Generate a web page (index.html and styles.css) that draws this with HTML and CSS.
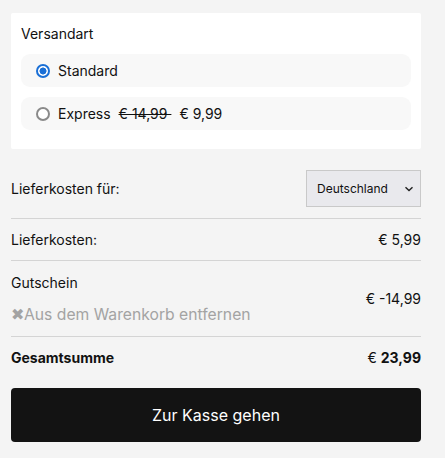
FILE: index.html
```html
<!DOCTYPE html>
<html lang="de">
<head>
<meta charset="utf-8">
<link rel="stylesheet" href="styles.css">
</head>
<body>
<div class="cart">
  <section class="card">
    <div class="card-title">Versandart</div>
    <div class="option">
      <span class="radio checked"></span>
      <span>Standard</span>
    </div>
    <div class="option">
      <span class="radio"></span>
      <span>Express</span>
      <span class="old-price">€ 14,99&nbsp;</span>
      <span>€ 9,99</span>
    </div>
  </section>

  <div class="row row-country">
    <span>Lieferkosten für:</span>
    <div class="select">
      <span>Deutschland</span>
      <svg class="chev" width="10" height="6" viewBox="0 0 10 6"><path d="M1.5 1.2 L5 4.6 L8.5 1.2" fill="none" stroke="#222" stroke-width="1.4"/></svg>
    </div>
  </div>

  <div class="row">
    <span>Lieferkosten:</span>
    <span>€ 5,99</span>
  </div>

  <div class="row row-coupon">
    <div class="coupon-left">
      <span>Gutschein</span>
      <span class="remove">✖Aus dem Warenkorb entfernen</span>
    </div>
    <span>€ -14,99</span>
  </div>

  <div class="row row-total">
    <span class="bold">Gesamtsumme</span>
    <span>€ <b>23,99</b></span>
  </div>

  <button class="checkout">Zur Kasse gehen</button>
</div>
</body>
</html>
```

FILE: styles.css
```css
html, body {
  margin: 0;
  background: #f4f4f4;
}
body {
  font-family: Inter, "Noto Sans", sans-serif;
  font-size: 14px;
  color: #111;
}
.cart {
  width: 410px;
  padding: 13px 0 0 11px;
}
.card {
  background: #fff;
  padding: 10px 10px 9px;
  border-radius: 2px;
  margin-bottom: 21px;
}
.card-title {
  line-height: 21px;
  margin-bottom: 10px;
}
.option {
  display: flex;
  align-items: center;
  height: 33px;
  background: #f8f8f8;
  border-radius: 9px;
  padding-left: 15px;
  margin-bottom: 10px;
  gap: 8px;
}
.radio {
  width: 14px;
  height: 14px;
  box-sizing: border-box;
  border-radius: 50%;
  border: 2px solid #8a8a8a;
  background: #fff;
  flex: none;
}
.radio.checked {
  border: 2px solid #1a6fd6;
  background: radial-gradient(circle, #1a6fd6 0 3.2px, #fff 3.8px);
}
.old-price {
  text-decoration: line-through;
  margin-left: 0;
}
.row {
  display: flex;
  justify-content: space-between;
  align-items: center;
  padding: 10px 0;
  line-height: 21px;
  border-top: 1px solid #d4d4d4;
}
.row-country {
  border-top: none;
  padding: 0 0 11px;
}
.select {
  height: 35px;
  background: #e9e9ed;
  border: 1px solid #c9c9c9;
  display: flex;
  align-items: center;
  justify-content: space-between;
  padding: 0 6px 0 10px;
  box-sizing: content-box;
  width: 97px;
  font-size: 12px;
}
.row-coupon {
  padding: 11px 0 11px;
}
.coupon-left {
  display: flex;
  flex-direction: column;
  gap: 11px;
}
.remove {
  color: #a3a3a3;
  font-size: 15.7px;
  line-height: 21px;
}
.bold, b {
  font-weight: 700;
}
.checkout {
  display: block;
  width: 410px;
  height: 54px;
  margin-top: 10px;
  border: none;
  border-radius: 4px;
  background: #131313;
  color: #fff;
  font-family: Inter, "Noto Sans", sans-serif;
  font-size: 16px;
}
```
